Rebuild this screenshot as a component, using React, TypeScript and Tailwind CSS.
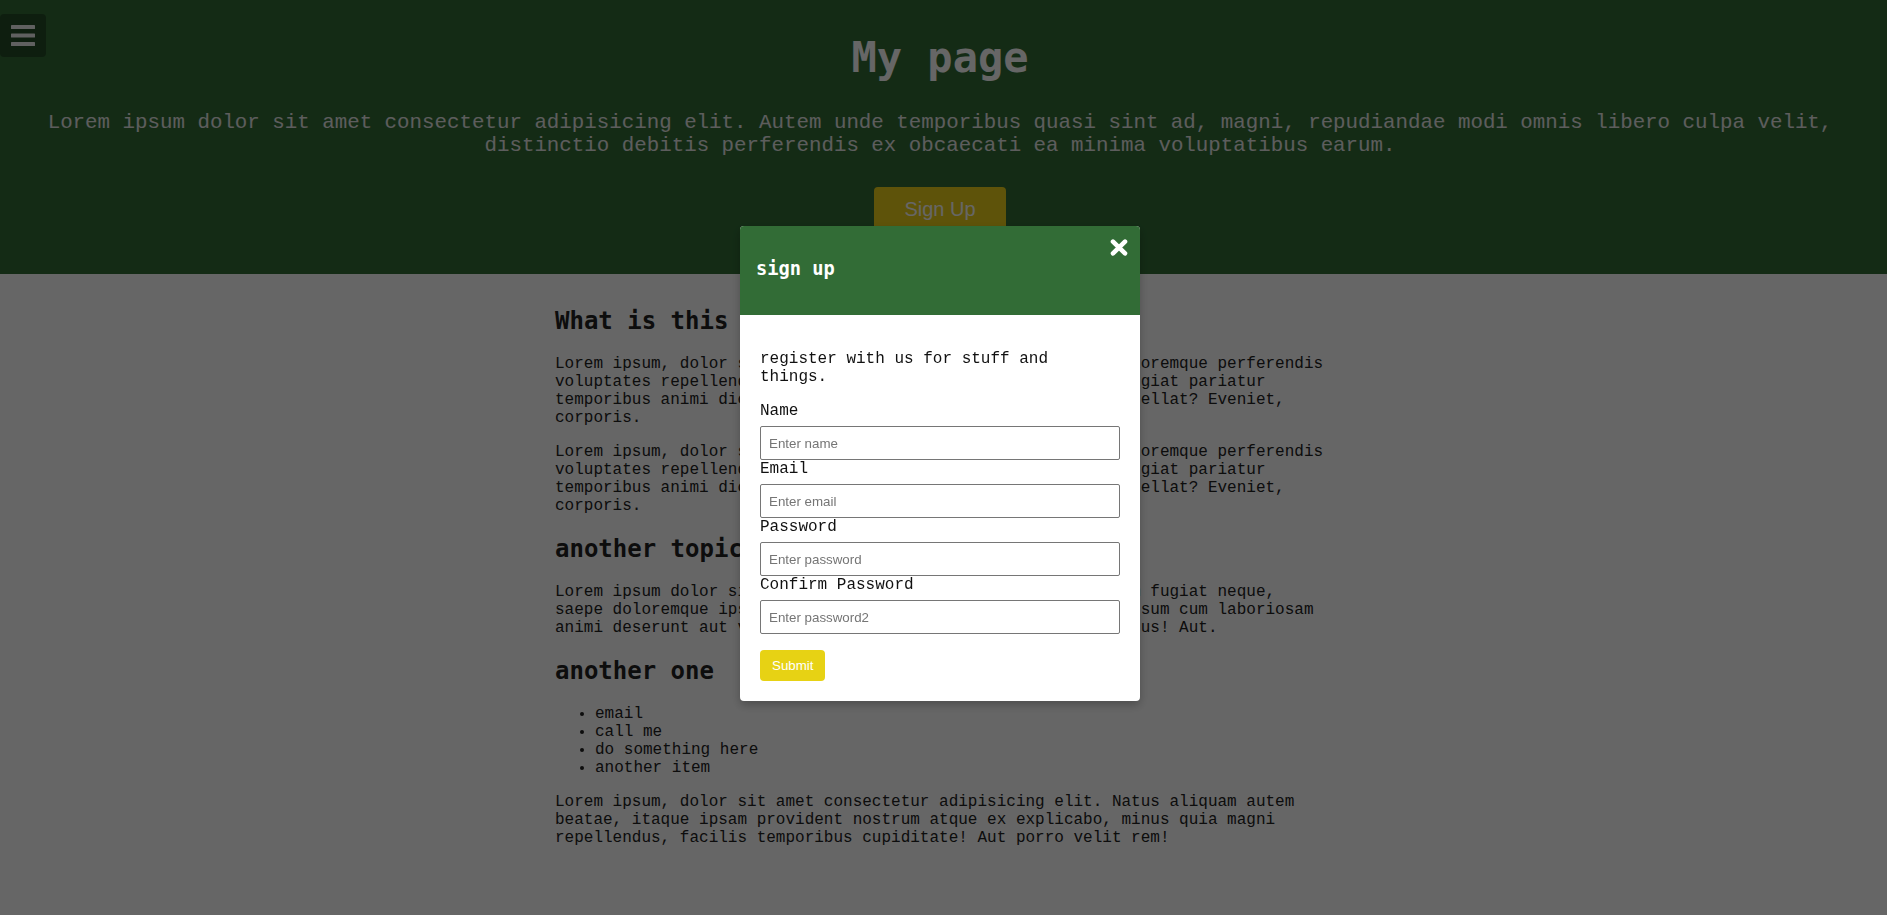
import React from 'react';

const para1 =
  'Lorem ipsum, dolor sit amet consectetur adipisicing elit. Doloremque perferendis voluptates repellendus quaerat ipsam tempora, ratione eius fugiat pariatur temporibus animi dicta nostrum ipsam quod sunt molestiae, repellat? Eveniet, corporis.';

const para2 =
  'Lorem ipsum dolor sit amet consectetur adipisicing elit. Enim fugiat neque, saepe doloremque ipsam nesciunt quidem architecto dolorem, ipsum cum laboriosam animi deserunt aut voluptatibus nobis quae placeat omnis, minus! Aut.';

const para3 =
  'Lorem ipsum, dolor sit amet consectetur adipisicing elit. Natus aliquam autem beatae, itaque ipsam provident nostrum atque ex explicabo, minus quia magni repellendus, facilis temporibus cupiditate! Aut porro velit rem!';

const fields = [
  { label: 'Name', type: 'text', placeholder: 'Enter name' },
  { label: 'Email', type: 'email', placeholder: 'Enter email' },
  { label: 'Password', type: 'password', placeholder: 'Enter password' },
  { label: 'Confirm Password', type: 'password', placeholder: 'Enter password2' },
];

function BarsIcon() {
  return (
    <svg width="24" height="21" viewBox="0 0 24 21" aria-hidden="true">
      <rect x="0" y="0" width="24" height="4" rx="0.6" fill="#efefef" />
      <rect x="0" y="8.5" width="24" height="4" rx="0.6" fill="#efefef" />
      <rect x="0" y="17" width="24" height="4" rx="0.6" fill="#efefef" />
    </svg>
  );
}

function CloseIcon() {
  return (
    <svg width="18" height="17" viewBox="0 0 18 17" aria-hidden="true">
      <path
        d="M3 2.7 L15 14.3 M15 2.7 L3 14.3"
        stroke="#ffffff"
        strokeWidth="4.6"
        strokeLinecap="round"
      />
    </svg>
  );
}

function SignUpModal() {
  return (
    <div className="fixed inset-0 z-20 flex justify-center bg-black/60 pt-[226px] pr-[7px]">
      <div className="h-fit w-[400px] overflow-hidden rounded-[4px] bg-white shadow-[0_4px_10px_rgba(0,0,0,0.25)]">
        <div className="relative h-[89px] bg-[#326c36] px-4 pt-[32px]">
          <h3 className="font-['DejaVu_Sans_Mono',monospace] text-[18.72px] font-bold leading-[21px] text-white">
            sign up
          </h3>
          <button type="button" aria-label="close" className="absolute right-[12px] top-[13px] leading-none">
            <CloseIcon />
          </button>
        </div>
        <div className="px-5 pt-[19px] pb-5 font-['Liberation_Mono',monospace] text-[16px] leading-[18px] text-[#111]">
          <p className="mt-4 mb-4">register with us for stuff and things.</p>
          <form onSubmit={(e) => e.preventDefault()}>
            {fields.map((f) => (
              <div key={f.label}>
                <label className="mb-[6px] block">{f.label}</label>
                <input
                  type={f.type}
                  placeholder={f.placeholder}
                  className="block h-[34px] w-full rounded-[2px] border border-[#767676] bg-white px-2 font-['Liberation_Sans',Arial,sans-serif] text-[13.33px] text-black placeholder:text-[#757575]"
                />
              </div>
            ))}
            <button
              type="submit"
              className="mt-4 h-[31px] rounded-[4px] bg-[#e7d214] px-3 font-['Liberation_Sans',Arial,sans-serif] text-[13.33px] text-white"
            >
              Submit
            </button>
          </form>
        </div>
      </div>
    </div>
  );
}

export default function App() {
  return (
    <div className="relative min-h-[915px] bg-white font-['Liberation_Mono',monospace] leading-[normal] text-[#222]">
      <header className="bg-[#326c36] pt-[33px] pb-[42px] pr-[7px] text-center">
        <h1 className="font-['DejaVu_Sans_Mono',monospace] text-[42px] font-bold leading-[49px] text-white">
          My page
        </h1>
        <p className="mt-[29px] px-4 text-[20.8px] leading-[23px] text-[#e8e8e8]">
          Lorem ipsum dolor sit amet consectetur adipisicing elit. Autem unde temporibus quasi sint ad, magni,
          repudiandae modi omnis libero culpa velit, distinctio debitis perferendis ex obcaecati ea minima
          voluptatibus earum.
        </p>
        <button
          type="button"
          className="mt-[30px] h-[45px] rounded-[4px] bg-[#ecd019] px-[30px] font-['Liberation_Sans',Arial,sans-serif] text-[20px] leading-[23px] text-white"
        >
          Sign Up
        </button>
      </header>

      <button
        type="button"
        aria-label="menu"
        className="absolute left-0 top-[14px] flex h-[43px] w-[46px] items-center justify-center rounded-[4px] bg-[#244c27]"
      >
        <BarsIcon />
      </button>

      <main className="pr-[7px] pb-10">
        <div className="mx-auto w-[770px] pt-[33px] text-[16px] leading-[18px]">
          <h2 className="mb-[20px] font-['DejaVu_Sans_Mono',monospace] text-[24px] font-bold leading-[28px]">
            What is this site?
          </h2>
          <p className="mb-4">{para1}</p>
          <p className="mb-[20px]">{para1}</p>
          <h2 className="mb-[20px] font-['DejaVu_Sans_Mono',monospace] text-[24px] font-bold leading-[28px]">
            another topic
          </h2>
          <p className="mb-[20px]">{para2}</p>
          <h2 className="mb-[20px] font-['DejaVu_Sans_Mono',monospace] text-[24px] font-bold leading-[28px]">
            another one
          </h2>
          <ul className="mb-4 list-disc pl-10">
            <li>email</li>
            <li>call me</li>
            <li>do something here</li>
            <li>another item</li>
          </ul>
          <p>{para3}</p>
        </div>
      </main>

      <SignUpModal />
    </div>
  );
}
